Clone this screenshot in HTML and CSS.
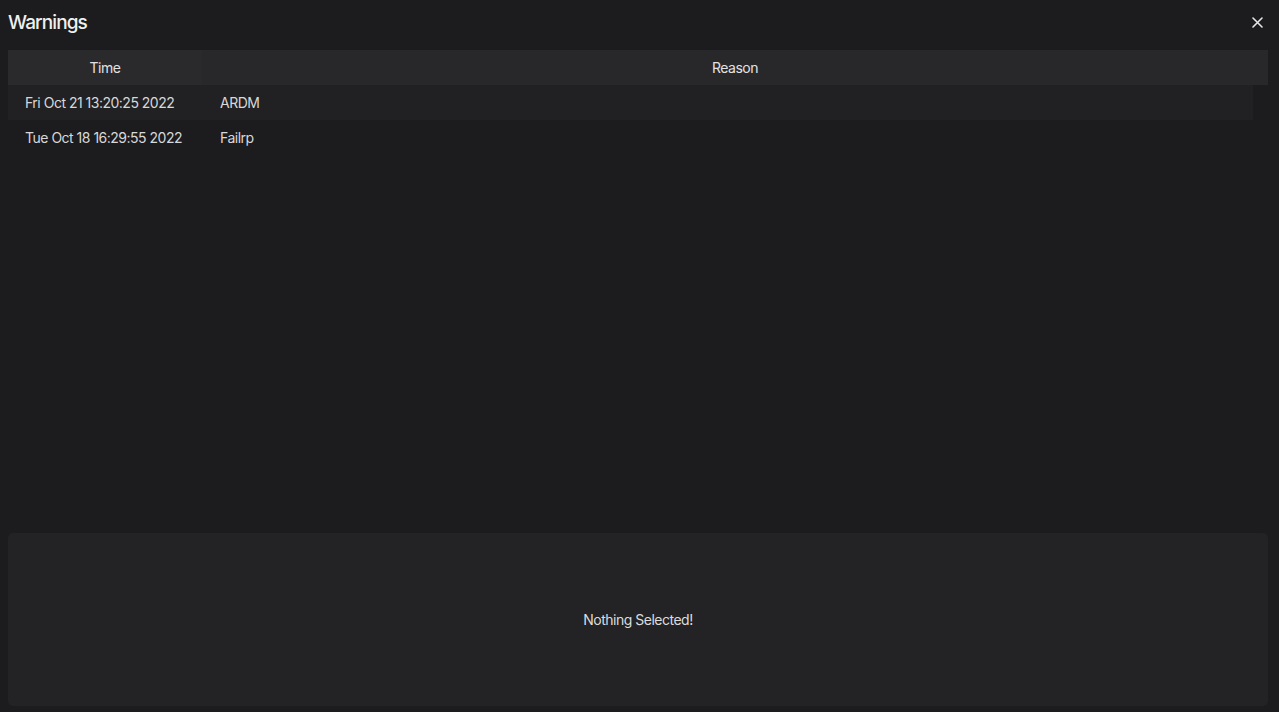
FILE: index.html
```html
<!DOCTYPE html>
<html lang="en">
<head>
    <meta charset="UTF-8">
    <title>Warnings</title>
    <link rel="stylesheet" href="styles.css">
</head>
<body>

<div class="window">
    <!-- Title bar -->
    <div class="titlebar">
        <h1>Warnings</h1>
        <button class="close-btn" aria-label="Close">
            <svg width="11" height="11" viewBox="0 0 11 11">
                <path d="M1 1 L10 10 M10 1 L1 10" stroke="#e6e6e6" stroke-width="1.6" stroke-linecap="round"/>
            </svg>
        </button>
    </div>

    <!-- Warnings list -->
    <div class="list">
        <table class="warnings">
            <thead>
                <tr>
                    <th class="col-time">Time</th>
                    <th class="col-reason">Reason</th>
                </tr>
            </thead>
            <tbody>
                <tr class="row odd">
                    <td>Fri Oct 21 13:20:25 2022</td>
                    <td>ARDM</td>
                </tr>
                <tr class="row">
                    <td>Tue Oct 18 16:29:55 2022</td>
                    <td>Failrp</td>
                </tr>
            </tbody>
        </table>
    </div>

    <!-- Details panel -->
    <div class="details">
        <span>Nothing Selected!</span>
    </div>
</div>

</body>
</html>
```

FILE: styles.css
```css
html, body {
    height: 100%;
}
body {
    font-family: Inter, "DejaVu Sans", sans-serif;
    background-color: #1c1c1f;
    color: #d6d6d6;
    margin: 0;
    padding: 0;
}
.window {
    height: 712px;
    display: flex;
    flex-direction: column;
    padding: 0 11px 6px 8px;
    box-sizing: border-box;
}
.titlebar {
    height: 50px;
    display: flex;
    align-items: center;
    justify-content: space-between;
}
.titlebar h1 {
    margin: 0 0 6px 0;
    font-size: 19px;
    font-weight: 500;
    color: #f0f0f0;
    letter-spacing: -0.9px;
}
.close-btn {
    background: none;
    border: none;
    padding: 0;
    margin: 0 5px 6px 0;
    width: 11px;
    height: 11px;
    cursor: pointer;
    display: flex;
}
.list {
    flex: 1;
}
.warnings {
    width: 100%;
    border-collapse: collapse;
    font-size: 14px;
    letter-spacing: -0.5px;
}
.warnings th {
    height: 35px;
    padding: 0;
    font-weight: 400;
    color: #e2e2e2;
    background-color: #28282b;
    text-align: center;
}
.warnings th.col-time {
    width: 194px;
    background-color: #2a2a2d;
}
.warnings td {
    height: 35px;
    padding: 0 0 0 17px;
    color: #d8d8d8;
}
.warnings td + td {
    padding-left: 18px;
}
.row.odd td {
    background-color: #212124;
}
.row.odd td:last-child {
    box-shadow: inset -15px 0 0 #1c1c1f;
}
.details {
    height: 173px;
    background-color: #232326;
    border-radius: 5px;
    display: flex;
    align-items: center;
    justify-content: center;
    font-size: 14px;
    letter-spacing: -0.5px;
    color: #dcdcdc;
}
```
